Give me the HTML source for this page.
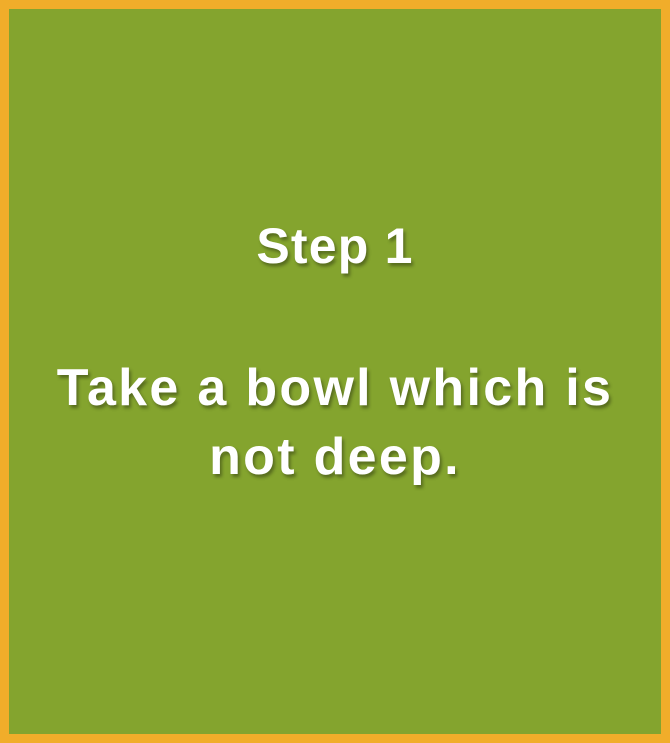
<html><head><style>
body{margin:0;width:670px;height:743px;overflow:hidden}
.box{position:absolute;left:0;top:0;width:652px;height:725px;border:9px solid #f1ad2a;background:#84a42e}
.t{position:absolute;left:0;width:670px;text-align:center;color:#fff;font-family:"Liberation Sans",sans-serif;font-weight:bold;text-shadow:2px 3px 3px rgba(0,0,0,.35);white-space:nowrap}
</style></head><body>
<div class="box"></div>
<div class="t" style="top:216px;font-size:50px;line-height:60px;letter-spacing:1.2px">Step 1</div>
<div class="t" style="top:354px;font-size:52px;line-height:69px;letter-spacing:2.3px">Take a bowl which is<br>not deep.</div>
</body></html>
